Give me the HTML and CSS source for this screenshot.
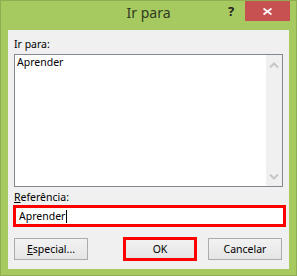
FILE: index.html
```html
<!DOCTYPE html>
<html lang="pt">
<head>
    <meta charset="UTF-8">
    <title>Ir para</title>
    <link rel="stylesheet" href="styles.css">
</head>
<body>
    <div class="window">
        <div class="titlebar">
            <div></div>
            <div class="title">Ir para</div>
            <div class="controls">
                <div class="help">?</div>
                <div class="close">
                    <svg width="9" height="7" viewBox="0 0 9 7">
                        <path d="M0.5 0.5 L8.5 6.5 M8.5 0.5 L0.5 6.5" stroke="#ffffff" stroke-width="1.8" fill="none"/>
                    </svg>
                </div>
            </div>
        </div>
        <div class="client">
            <div class="label first">Ir para:</div>
            <div class="listbox">
                <div class="items">
                    <div class="item">Aprender</div>
                </div>
                <div class="scrollbar">
                    <svg class="arrow up" width="10" height="6" viewBox="0 0 10 6">
                        <polyline points="1,5.5 5,1.5 9,5.5" stroke="#c6c6c6" stroke-width="2" fill="none"/>
                    </svg>
                    <svg class="arrow down" width="10" height="6" viewBox="0 0 10 6">
                        <polyline points="1,0.5 5,4.5 9,0.5" stroke="#c6c6c6" stroke-width="2" fill="none"/>
                    </svg>
                </div>
            </div>
            <div class="label"><u>R</u>eferência:</div>
            <div class="ref-input">Aprender<span class="caret"></span></div>
            <div class="buttons">
                <div class="btn"><u>E</u>special...</div>
                <div class="btn ok">OK</div>
                <div class="btn cancel">Cancelar</div>
            </div>
        </div>
    </div>
</body>
</html>
```

FILE: styles.css
```css
/* Janela estilo Windows 8 */
body {
  margin: 0;
  font-family: "Noto Sans", "Liberation Sans", sans-serif;
  font-size: 10.5px;
  color: #000000;
}

.window {
  width: 297px;
  height: 276px;
  box-sizing: border-box;
  background-color: #a6ca60; /* verde */
  border: 1px solid #8fae52;
  padding: 0 7px 6px 7px;
  display: flex;
  flex-direction: column;
}

/* Barra de titulo */
.titlebar {
  height: 29px;
  margin: 0 -7px;
  display: grid;
  grid-template-columns: 1fr auto 1fr;
}

.title {
  font-size: 14px;
  line-height: 24px;
  color: #303a22;
}

.controls {
  display: flex;
  justify-content: flex-end;
  align-items: flex-start;
  padding-right: 6px;
}

.help {
  width: 28px;
  height: 20px;
  line-height: 20px;
  text-align: center;
  font-size: 13px;
  font-weight: bold;
  color: #222222;
}

.close {
  width: 45px;
  height: 20px;
  background-color: #c75050;
  display: flex;
  align-items: center;
  justify-content: center;
}

/* Area do cliente */
.client {
  height: 239px;
  box-sizing: border-box;
  background-color: #f0f0f0;
  padding: 7px 6px 8px 6px;
  display: flex;
  flex-direction: column;
}

.label {
  line-height: 15px;
  margin-top: 3px;
}

.label.first {
  margin-top: 0;
  margin-bottom: 2px;
}

.listbox {
  height: 133px;
  box-sizing: border-box;
  border: 1px solid #828790;
  background-color: #ffffff;
  display: flex;
}

.items {
  flex: 1;
}

.item {
  line-height: 15px;
  padding-left: 2px;
}

.scrollbar {
  width: 16px;
  background-color: #f0f0f0;
  display: flex;
  flex-direction: column;
  justify-content: space-between;
  align-items: center;
  padding: 7px 0 6px 0;
}

.ref-input {
  height: 22px;
  box-sizing: border-box;
  margin-left: -1px;
  margin-right: -3px;
  border: 3px solid #ff0000;
  background-color: #ffffff;
  line-height: 16px;
  padding-left: 3px;
  display: flex;
  align-items: center;
}

.caret {
  width: 1px;
  height: 13px;
  background-color: #000000;
  margin-left: 1px;
}

.buttons {
  margin-top: 10px;
  height: 24px;
  display: flex;
  align-items: center;
}

.btn {
  width: 74px;
  height: 22px;
  box-sizing: border-box;
  border: 1px solid #acacac;
  background: linear-gradient(#f2f2f2, #e5e5e5);
  text-align: center;
  line-height: 20px;
}

.btn.ok {
  height: 24px;
  border: 3px solid #ff0000;
  line-height: 18px;
  margin-left: 35px;
}

.btn.cancel {
  margin-left: 11px;
}
```
